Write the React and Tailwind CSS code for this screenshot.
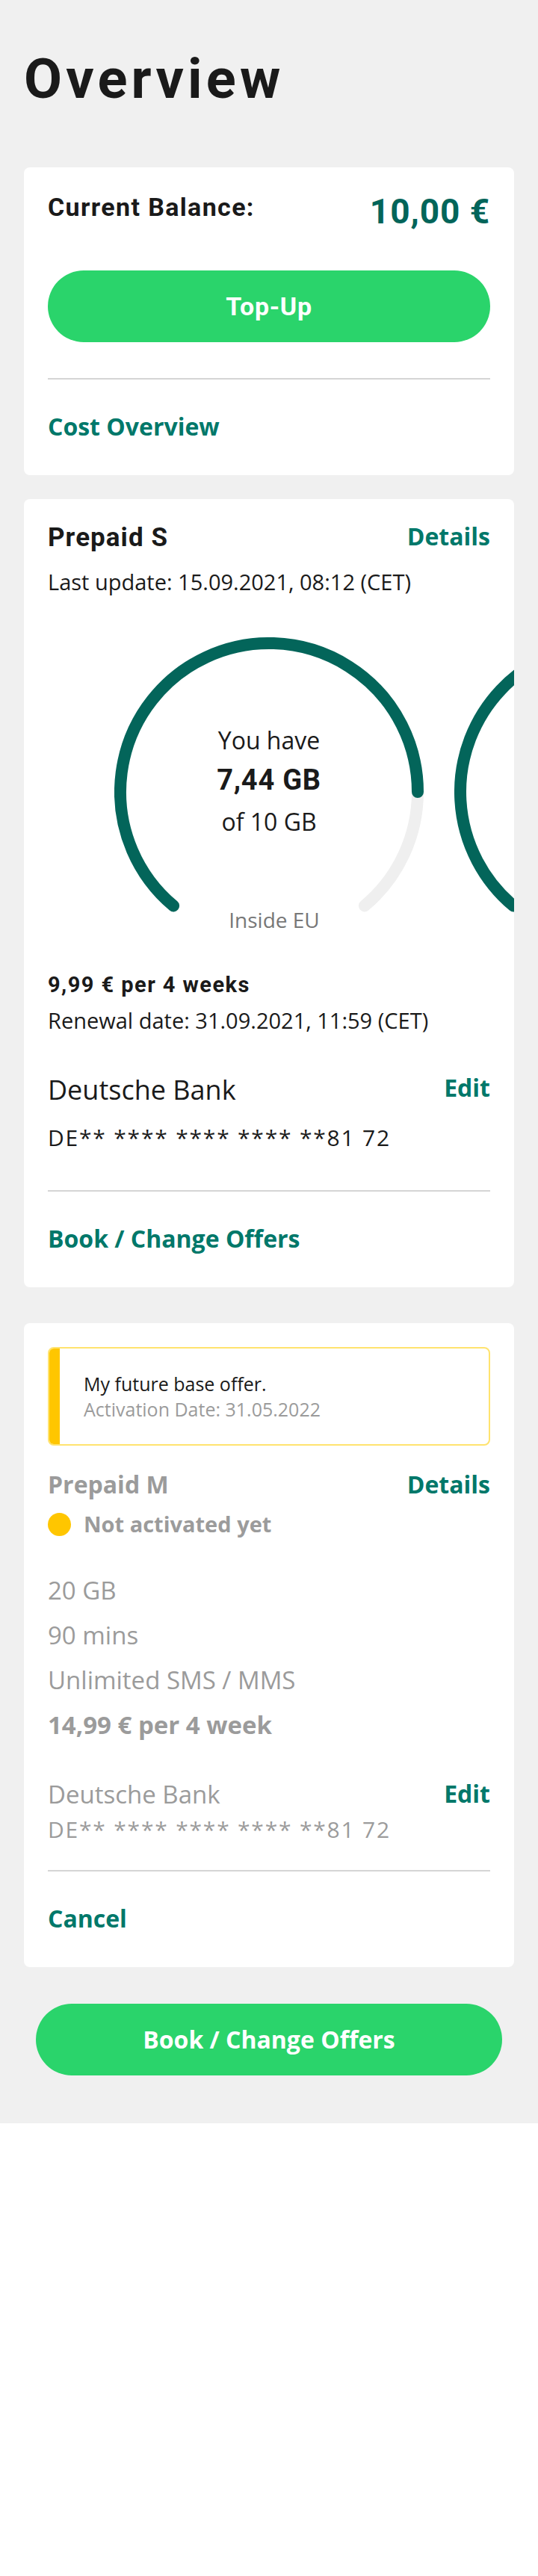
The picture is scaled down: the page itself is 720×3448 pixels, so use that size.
import React from "react";

const din = "font-['Roboto','Liberation_Sans',sans-serif] font-bold";
const teal = "text-[#00786a]";

function Gauge({ value, total, label, unit, pct }) {
  // arc runs from -140deg to +140deg (0 = top), progress end given by pct
  const r = 199;
  const c = 207;
  const pt = (deg) => {
    const a = (deg * Math.PI) / 180;
    return [c + r * Math.sin(a), c - r * Math.cos(a)];
  };
  const start = pt(-140);
  const end = pt(140);
  const endDeg = -140 + 280 * pct;
  const mid = pt(endDeg);
  const large = 280 * pct > 180 ? 1 : 0;
  const restLarge = 280 * (1 - pct) > 180 ? 1 : 0;

  return (
    <div className="relative w-[414px] h-[414px] shrink-0">
      <svg width="414" height="414" viewBox="0 0 414 414" fill="none">
        {pct < 1 && (
          <path
            d={`M ${mid[0]} ${mid[1]} A ${r} ${r} 0 ${restLarge} 1 ${end[0]} ${end[1]}`}
            stroke="#efefef"
            strokeWidth="16"
            strokeLinecap="round"
          />
        )}
        <path
          d={`M ${start[0]} ${start[1]} A ${r} ${r} 0 ${large} 1 ${mid[0]} ${mid[1]}`}
          stroke="#03655a"
          strokeWidth="16"
          strokeLinecap="round"
        />
      </svg>
      {value && (
        <div className="absolute left-0 right-0 top-[122px] flex flex-col items-center text-[#1a1a1a]">
          <p className="text-[32px] leading-none">You have</p>
          <p className={`${din} text-[38px] leading-none tracking-[0.02em] mt-[18px]`}>
            {value} {unit}
          </p>
          <p className="text-[32px] leading-none mt-[21px]">
            of {total} {unit}
          </p>
        </div>
      )}
      {label && (
        <p className="absolute left-0 right-0 top-[364px] pl-[14px] text-center text-[28px] leading-none text-[#777]">
          {label}
        </p>
      )}
    </div>
  );
}

function Divider() {
  return <div className="h-[2px] bg-[#d5d5d5]" />;
}

export default function App() {
  return (
    <div className="bg-[#f0f0f0] pb-16 font-['Open_Sans',sans-serif] text-[#1a1a1a]">
      <h1 className={`${din} text-[74px] leading-none tracking-[0.07em] pl-8 pt-[69px]`}>
        Overview
      </h1>

      {/* balance */}
      <section className="mx-8 mt-[81px] bg-white rounded-lg px-8 pt-9 pb-[49px]">
        <div className="flex items-start justify-between">
          <span className={`${din} text-[34px] leading-none tracking-[0.04em]`}>Current Balance:</span>
          <span className={`${din} text-[46px] leading-none tracking-[0.02em] text-[#03655a]`}>10,00 €</span>
        </div>
        <button className={`${din} mt-14 w-full h-24 rounded-full bg-[#2ad46b] text-white text-[34px] tracking-[0.02em]`}>
          Top-Up
        </button>
        <div className="mt-12">
          <Divider />
        </div>
        <p className={`mt-[47px] text-[32px] leading-none font-bold ${teal}`}>Cost Overview</p>
      </section>

      {/* current plan */}
      <section className="mx-8 mt-8 bg-white rounded-lg pl-8 pt-[34px] pb-[49px] overflow-hidden">
        <div className="pr-8 flex items-start justify-between">
          <span className={`${din} text-[35px] leading-none tracking-[0.03em]`}>Prepaid S</span>
          <span className={`text-[32px] leading-none font-bold ${teal}`}>Details</span>
        </div>
        <p className="mt-[27px] text-[29px] leading-none">Last update: 15.09.2021, 08:12 (CET)</p>

        <div className="mt-[60px] flex gap-[41px] pl-[89px] overflow-hidden">
          <Gauge value="7,44" total="10" unit="GB" label="Inside EU" pct={230 / 280} />
          <Gauge pct={1} />
        </div>

        <div className="pr-8">
          <p className={`${din} mt-[37px] text-[29px] leading-none tracking-[0.05em]`}>9,99 € per 4 weeks</p>
          <p className="mt-[18px] text-[29px] leading-none">Renewal date: 31.09.2021, 11:59 (CET)</p>

          <div className="mt-[60px] flex items-start justify-between">
            <span className="mt-[1px] text-[36px] leading-none">Deutsche Bank</span>
            <span className={`text-[32px] leading-none font-bold ${teal}`}>Edit</span>
          </div>
          <p className="mt-[31px] text-[30px] leading-none tracking-[0.06em]">DE** **** **** **** **81 72</p>

          <div className="mt-[55px]">
            <Divider />
          </div>
          <p className={`mt-[47px] text-[32px] leading-none font-bold ${teal}`}>Book / Change Offers</p>
        </div>
      </section>

      {/* future plan */}
      <section className="mx-8 mt-12 bg-white rounded-lg px-8 pt-8 pb-[49px] text-[#9b9b9b]">
        <div className="flex rounded-lg border-2 border-[#ffe36e] overflow-hidden">
          <div className="w-4 -my-[2px] -ml-[2px] bg-[#ffc600] rounded-l-lg" />
          <div className="pl-8 pt-[35px] pb-[34px]">
            <p className="text-[25px] leading-none text-[#1a1a1a]">My future base offer.</p>
            <p className="mt-[9px] text-[25px] leading-none text-[#9b9b9b]">Activation Date: 31.05.2022</p>
          </div>
        </div>

        <div className="mt-9 flex items-start justify-between">
          <span className="text-[32px] leading-none font-bold">Prepaid M</span>
          <span className={`text-[32px] leading-none font-bold ${teal}`}>Details</span>
        </div>
        <div className="mt-[21px] flex items-center gap-[17px]">
          <span className="w-[31px] h-[31px] rounded-full bg-[#ffc600]" />
          <span className="text-[29px] leading-8 font-bold">Not activated yet</span>
        </div>

        <div className="mt-[56px] flex flex-col gap-[27px] text-[33px] leading-none">
          <p>20 GB</p>
          <p>90 mins</p>
          <p>Unlimited SMS / MMS</p>
          <p className="font-bold">14,99 € per 4 week</p>
        </div>

        <div className="mt-[60px] flex items-start justify-between">
          <span className="text-[33px] leading-none">Deutsche Bank</span>
          <span className={`text-[32px] leading-none font-bold ${teal}`}>Edit</span>
        </div>
        <p className="mt-4 text-[30px] leading-none tracking-[0.06em]">DE** **** **** **** **81 72</p>

        <div className="mt-[39px]">
          <Divider />
        </div>
        <p className={`mt-[47px] text-[32px] leading-none font-bold ${teal}`}>Cancel</p>
      </section>

      <div className="mx-12 mt-[49px]">
        <button className="w-full h-24 rounded-full bg-[#2ad46b] text-white text-[32px] font-bold">
          Book / Change Offers
        </button>
      </div>
    </div>
  );
}
